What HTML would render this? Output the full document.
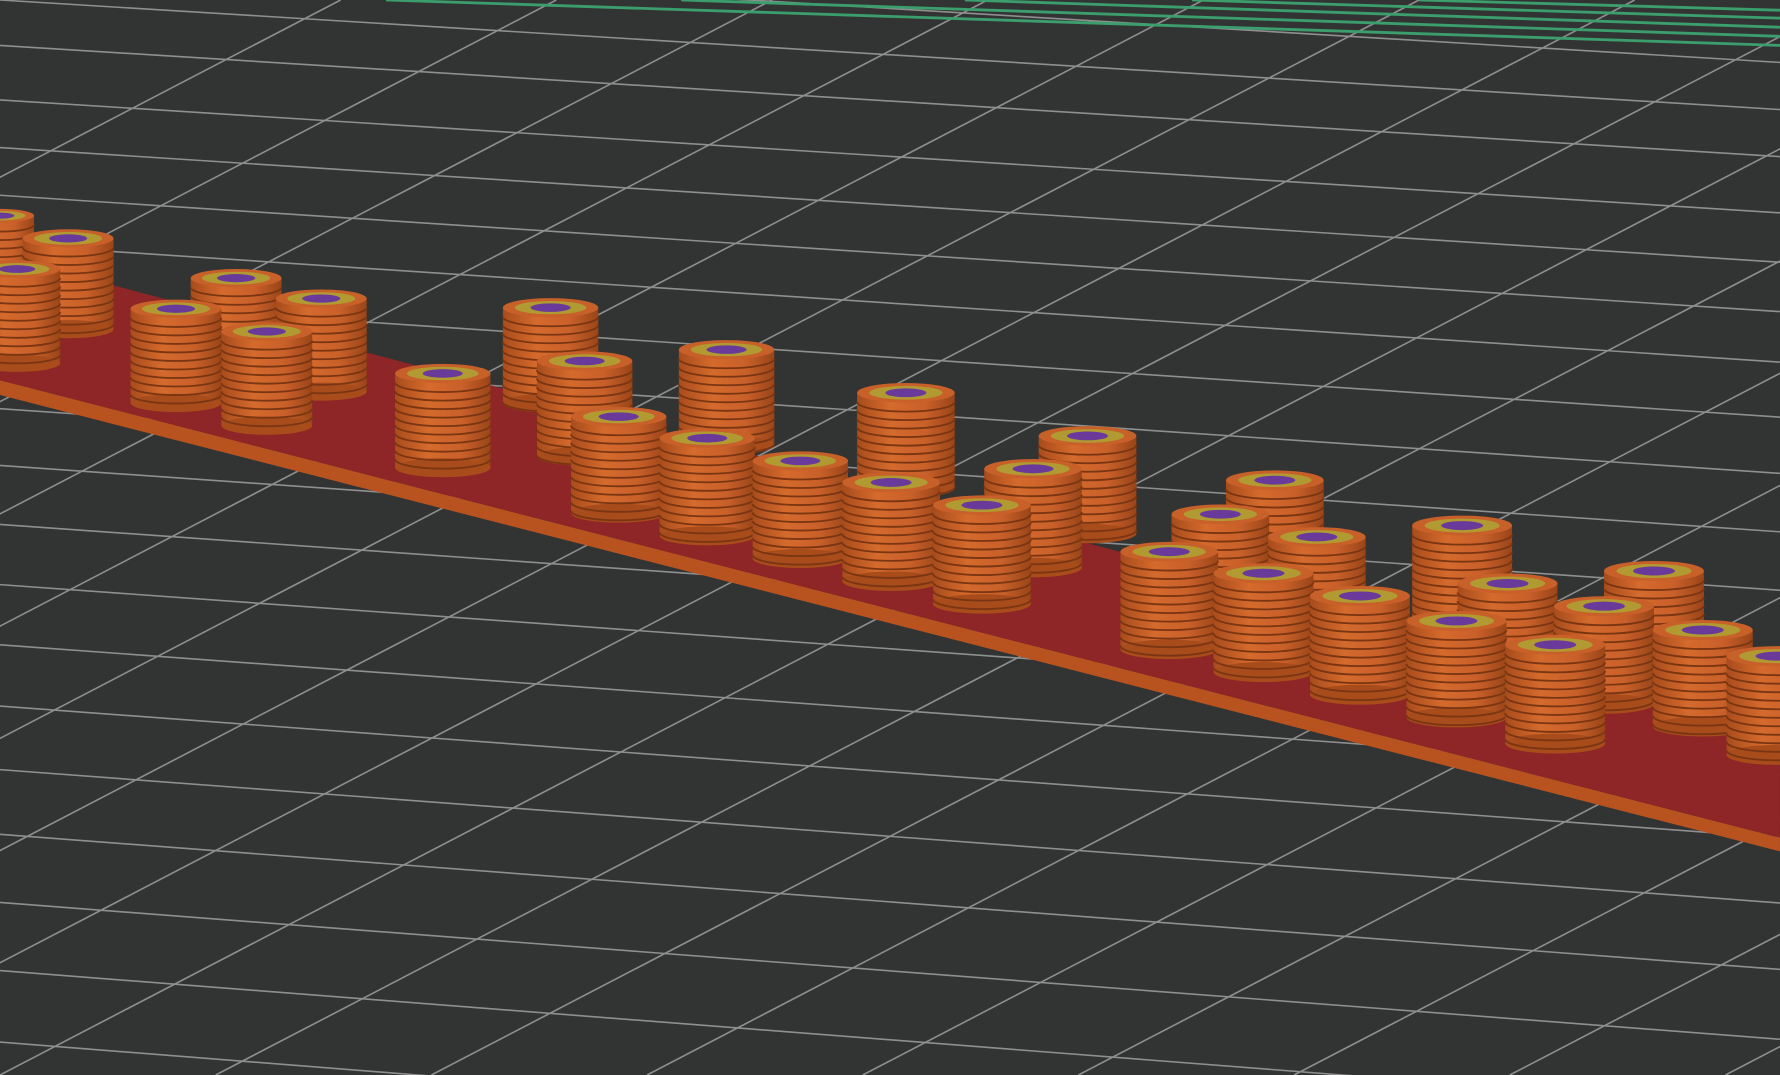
<!DOCTYPE html>
<html><head><meta charset="utf-8"><style>
html,body{margin:0;padding:0;background:#323333;overflow:hidden;width:1780px;height:1075px}
svg{display:block;position:absolute;left:0;top:0}
</style></head><body>
<svg id="s" width="1780" height="1075" viewBox="0 0 1568 947" xmlns="http://www.w3.org/2000/svg">
<defs>
<linearGradient id="body" x1="0" x2="1" y1="0" y2="0">
<stop offset="0" stop-color="#a84c1c"/><stop offset="0.35" stop-color="#d56a2c"/><stop offset="0.7" stop-color="#c9602a"/><stop offset="1" stop-color="#9a4518"/>
</linearGradient>
</defs>
<rect width="1568" height="947" fill="#323333"/>
<g id="grid" stroke="#8f8f8f" stroke-width="1.4" fill="none"></g>
<g stroke="#3b9e6c" stroke-width="2.5">
<line x1="340" y1="0" x2="1568" y2="40"/>
<line x1="600" y1="0" x2="1568" y2="32"/>
<line x1="850" y1="0" x2="1568" y2="24"/>
<line x1="1050" y1="0" x2="1568" y2="16"/>
<line x1="1250" y1="0" x2="1568" y2="9"/>
</g>
<polygon points="0,335 1568,738 1568,750 0,348" fill="#b85320"/>
<polygon points="0,225 1568,640 1568,738 0,335" fill="#8e2527"/>
<g id="cyl"></g>
</svg>
<script>
const ns="http://www.w3.org/2000/svg";
const g=document.getElementById('grid');
function ln(x1,y1,x2,y2){const l=document.createElementNS(ns,'line');l.setAttribute('x1',x1);l.setAttribute('y1',y1);l.setAttribute('x2',x2);l.setAttribute('y2',y2);g.appendChild(l);}
let ys=[-40,0,40,88,130,172,215,262,310,360,410,462,515,568,622,678,735,795,855,918,985];
ys.forEach((y,i)=>{ln(0,y,1568,y+95+i*1.5);});
for(let k=-8;k<14;k++){let x0=k*190;ln(x0,947,x0+1820,0);}
const c=document.getElementById('cyl');
const C=[[0,190,270,30],[60,210,290,40],[15,237,320,38],[208,245,330,40],[283,263,345,40],[155,272,355,40],[235,292,375,40],[485,271,355,42],[640,308,392,42],[515,318,402,42],[390,329,412,42],[798,346,430,43],[545,367,452,42],[958,384,470,43],[623,386,472,42],[705,406,492,42],[910,413,500,43],[1123,423,505,43],[785,425,512,43],[865,445,532,43],[1075,453,540,43],[1288,463,548,44],[1160,473,555,43],[1030,486,572,43],[1457,503,588,44],[1113,505,592,44],[1328,514,600,44],[1198,525,612,44],[1413,534,620,44],[1283,547,632,44],[1500,555,640,44],[1370,568,655,44],[1565,578,665,44]];
let h='';
C.forEach(([x,t,b,r])=>{
 const ry=r*0.2;
 h+=`<rect x="${x-r}" y="${t}" width="${2*r}" height="${b-t}" fill="url(#body)"/>`;
 h+=`<ellipse cx="${x}" cy="${b}" rx="${r}" ry="${ry}" fill="#a84c1c"/>`;
 for(let y=t+8;y<b;y+=7.5){h+=`<path d="M${x-r} ${y} A${r} ${ry} 0 0 0 ${x+r} ${y}" stroke="#7a3512" stroke-width="1.6" fill="none"/>`;}
 h+=`<ellipse cx="${x}" cy="${t}" rx="${r}" ry="${ry}" fill="#c8602a"/>`;
 h+=`<ellipse cx="${x}" cy="${t}" rx="${r*0.75}" ry="${ry*0.7}" fill="#b29a32"/>`;
 h+=`<ellipse cx="${x}" cy="${t}" rx="${r*0.42}" ry="${ry*0.45}" fill="#6a3a9a"/>`;
});
c.innerHTML=h;
</script>
</body></html>
